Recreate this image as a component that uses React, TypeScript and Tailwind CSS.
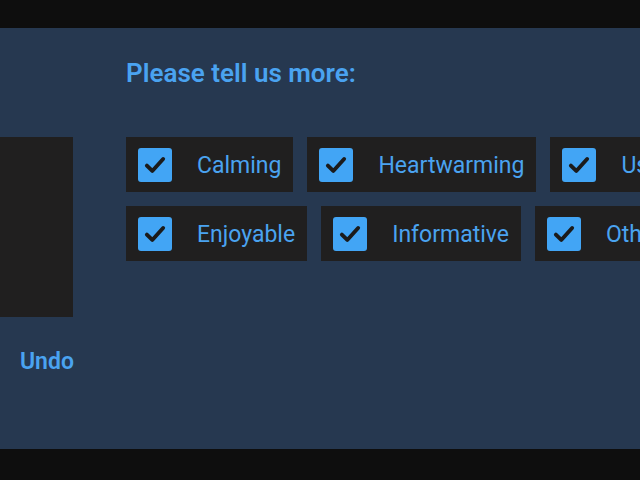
import React from "react";

const Check = () => (
  <div className="w-[34px] h-[34px] rounded-[3px] bg-[#42a5f5] flex items-center justify-center shrink-0">
    <svg width="26" height="26" viewBox="0 0 24 24" fill="none">
      <path d="M4.5 12.5 L9.5 17.5 L19.5 6.5" stroke="#1b1b1b" strokeWidth="3.6" strokeLinecap="round" strokeLinejoin="round" />
    </svg>
  </div>
);

const Chip = ({ label }: { label: string }) => (
  <div className="h-[55px] bg-[#201f1f] flex items-center pl-[12px] pr-[12px] gap-[25px] shrink-0">
    <Check />
    <span className="pt-[4px] text-[23px] text-[#4aa3f0] whitespace-nowrap">{label}</span>
  </div>
);

export default function App() {
  return (
    <div className="w-[640px] h-[480px] flex flex-col overflow-hidden" style={{ fontFamily: "Roboto, 'Liberation Sans', sans-serif" }}>
      <div className="h-[28px] bg-[#0e0e0e] shrink-0" />
      <div className="flex-1 bg-[#263850] flex overflow-hidden">
        <div className="w-[73px] shrink-0 flex flex-col pt-[109px]">
          <div className="h-[180px] bg-[#201f1f]" />
          <div className="pl-[20px] pt-[31px] text-[23px] font-semibold text-[#4aa3f0] leading-[28px] whitespace-nowrap">Undo</div>
        </div>
        <div className="ml-[53px] flex flex-col pt-[29px] min-w-0">
          <div className="text-[26px] font-semibold text-[#4aa3f0] leading-[32px] whitespace-nowrap">Please tell us more:</div>
          <div className="mt-[48px] flex flex-col gap-[14px]">
            <div className="flex gap-[14px]">
              <Chip label="Calming" />
              <Chip label="Heartwarming" />
              <Chip label="Useful" />
            </div>
            <div className="flex gap-[14px]">
              <Chip label="Enjoyable" />
              <Chip label="Informative" />
              <Chip label="Other" />
            </div>
          </div>
        </div>
      </div>
      <div className="h-[31px] bg-[#0e0e0e] shrink-0" />
    </div>
  );
}
